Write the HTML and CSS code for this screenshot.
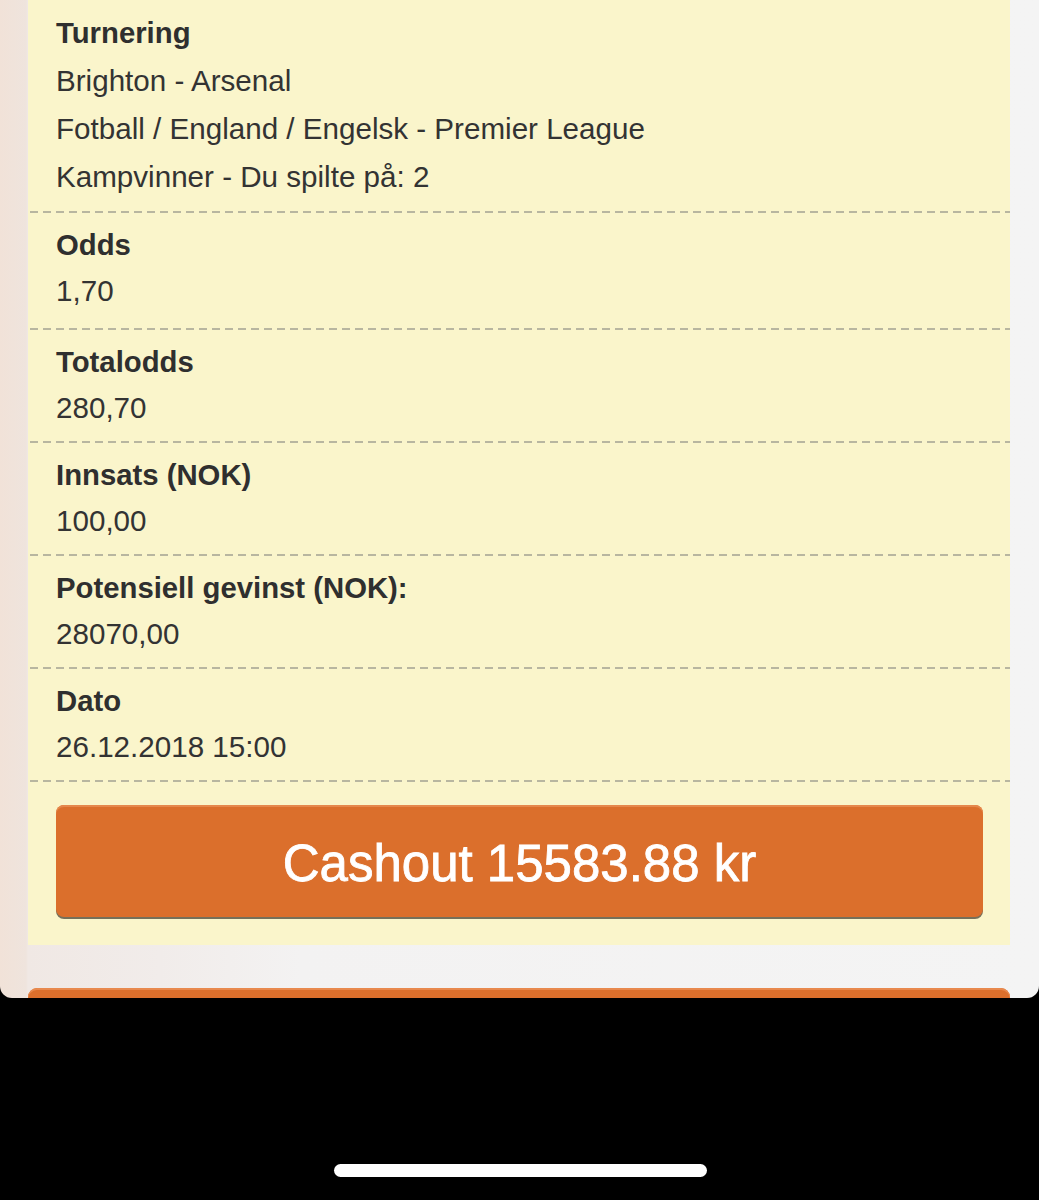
FILE: index.html
```html
<!DOCTYPE html>
<html lang="no">
<head>
<meta charset="utf-8">
<title>Kupong</title>
<link rel="stylesheet" href="styles.css">
</head>
<body>
<div class="screen">
  <div class="card">
    <div class="sec sec-first">
      <div class="label">Turnering</div>
      <div class="value">Brighton - Arsenal</div>
      <div class="value">Fotball / England / Engelsk - Premier League</div>
      <div class="value">Kampvinner - Du spilte på: 2</div>
    </div>
    <div class="sec sec-odds">
      <div class="label">Odds</div>
      <div class="value">1,70</div>
    </div>
    <div class="sec">
      <div class="label">Totalodds</div>
      <div class="value">280,70</div>
    </div>
    <div class="sec">
      <div class="label">Innsats (NOK)</div>
      <div class="value">100,00</div>
    </div>
    <div class="sec">
      <div class="label">Potensiell gevinst (NOK):</div>
      <div class="value">28070,00</div>
    </div>
    <div class="sec">
      <div class="label">Dato</div>
      <div class="value">26.12.2018 15:00</div>
    </div>
    <div class="actions">
      <button class="cashout">Cashout 15583.88 kr</button>
    </div>
  </div>
  <div class="next-bar"></div>
</div>
<div class="home-area">
  <div class="home-indicator"></div>
</div>
</body>
</html>
```

FILE: styles.css
```css
html, body {
  margin: 0;
  padding: 0;
  background: #000;
}

body {
  font-family: "Liberation Sans", Arial, Helvetica, sans-serif;
  color: #333;
}

.screen {
  height: 998px;
  border-radius: 0 0 12px 12px;
  overflow: hidden;
  box-sizing: border-box;
  padding: 0 29px 0 28px;
  background:
    linear-gradient(90deg, #f1e2d8 0, #efe4dd 26px, #f0e8e4 28px, #f1ecea 160px, #f3f2f2 300px, #f4f4f4 100%);
  display: flex;
  flex-direction: column;
}

.card {
  background: #faf5cb;
}

.sec {
  padding: 9px 28px 12px;
  background-image: linear-gradient(90deg, #b8b6a0 0, #b8b6a0 8px, transparent 8px, transparent 13px);
  background-size: 13px 2px;
  background-repeat: repeat-x;
  background-position: 2px 100%;
}

.sec-first {
  padding-top: 9px;
  padding-bottom: 12px;
}

.sec-first .label,
.sec-first .value {
  line-height: 48px;
}

.sec-odds {
  padding-bottom: 16px;
}

.label {
  font-size: 29.3px;
  font-weight: bold;
  line-height: 46px;
  color: #2f2f2f;
}

.value {
  font-size: 29.6px;
  line-height: 46px;
  color: #333;
}

.actions {
  padding: 23px 27px 28px 28px;
}

.cashout {
  display: block;
  width: 100%;
  height: 112px;
  border: 0;
  border-radius: 8px;
  background: #db6f2c;
  box-shadow: inset 0 2px 0 #e5884c, 0 2px 0 #76705a;
  color: #fff;
  font-family: "Liberation Sans", Arial, Helvetica, sans-serif;
  font-size: 51px;
  -webkit-text-stroke: 0.8px #fff;
  padding: 4px 0 0;
}

.next-bar {
  margin-top: 43px;
  height: 14px;
  border-radius: 9px 9px 0 0;
  background: #db6f2c;
  box-shadow: inset 0 2px 0 #e8894e;
}

.home-area {
  height: 202px;
  display: flex;
  justify-content: center;
  align-items: flex-start;
}

.home-indicator {
  margin-top: 166px;
  margin-left: 1px;
  width: 373px;
  height: 13px;
  border-radius: 7px;
  background: #fff;
}
```
